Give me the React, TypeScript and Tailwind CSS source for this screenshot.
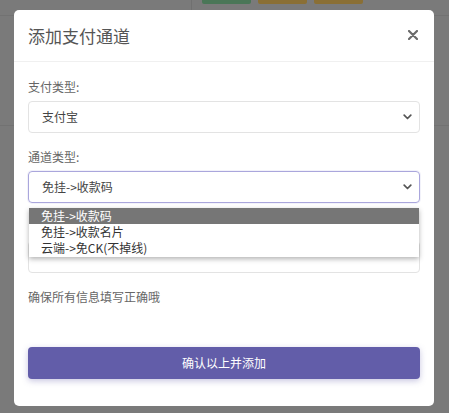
import React from "react";

const FONT = { fontFamily: '"Noto Sans CJK SC", "Noto Sans", sans-serif' };

function Chevron() {
  return (
    <svg width="9" height="6" viewBox="0 0 9 6" className="shrink-0">
      <path d="M1.2 1.2 L4.5 4.5 L7.8 1.2" fill="none" stroke="#555" strokeWidth="1.7" strokeLinecap="round" strokeLinejoin="round" />
    </svg>
  );
}

function FakeSelect({ value, focused }: { value: string; focused?: boolean }) {
  return (
    <div
      className={
        "flex h-8 items-center justify-between rounded-[4px] border pl-[13px] pr-[7px] text-[12px] text-[#444] " +
        (focused ? "border-[#aaa6dc] shadow-[0_0_0_1px_rgba(170,166,220,0.15)]" : "border-[#e3e3e3]")
      }
    >
      <span>{value}</span>
      <Chevron />
    </div>
  );
}

const OPTIONS = ["免挂->收款码", "免挂->收款名片", "云端->免CK(不掉线)"];

export default function App() {
  return (
    <div className="relative h-[413px] w-[449px] overflow-hidden bg-[#7a7a7a]" style={FONT}>
      {/* dimmed page behind the overlay */}
      <div className="flex h-[16px] border-b border-[#727272]">
        <div className="w-[192px] border-r border-[#707070]" />
        <div className="flex gap-[7px] pl-[10px]">
          <div className="h-[4px] w-[49px] rounded-b-[2px] bg-[#4a7657]" />
          <div className="h-[4px] w-[49px] rounded-b-[2px] bg-[#8a6f35]" />
          <div className="h-[4px] w-[49px] rounded-b-[2px] bg-[#8a6f35]" />
        </div>
      </div>
      <div className="h-[110px] border-b border-[#727272]" />

      {/* modal */}
      <div className="absolute left-[14px] top-[10px] flex h-[396px] w-[420px] flex-col rounded-[5px] bg-white">
        <div className="flex h-[52px] items-center justify-between border-b border-[#f0f0f0] px-[14px]">
          <span className="text-[17px] text-[#555]">添加支付通道</span>
          <svg width="10" height="10" viewBox="0 0 10 10" className="mr-[2px] mt-[-2px]">
            <path d="M1 1 L9 9 M9 1 L1 9" stroke="#6a6a6a" strokeWidth="2.2" strokeLinecap="round" />
          </svg>
        </div>
        <div className="px-[14px] pt-[16px]">
          <div className="mb-[15px]">
            <div className="mb-[5px] h-[18px] text-[12px] leading-[18px] text-[#666]">支付类型:</div>
            <FakeSelect value="支付宝" />
          </div>
          <div className="relative mb-[15px]">
            <div className="mb-[5px] h-[18px] text-[12px] leading-[18px] text-[#666]">通道类型:</div>
            <FakeSelect value="免挂->收款码" focused />
            <div className="absolute left-[1px] right-[1px] top-[60px] z-10 bg-white pb-[1px] shadow-[0_2px_5px_rgba(0,0,0,0.3)]">
              {OPTIONS.map((o, i) => (
                <div
                  key={o}
                  className={
                    "h-[16px] pl-[12px] text-[12px] leading-[16px] " +
                    (i === 0 ? "bg-[#767676] text-white" : "text-[#333]")
                  }
                >
                  {o}
                </div>
              ))}
            </div>
          </div>
          <div className="mb-[15px]">
            <div className="mb-[5px] h-[18px]" />
            <div className="h-8 rounded-[4px] border border-[#e3e3e3]" />
          </div>
          <div className="h-[18px] text-[12px] leading-[18px] text-[#666]">确保所有信息填写正确哦</div>
          <button className="mt-[41px] flex h-8 w-full items-center justify-center rounded-[4px] bg-[#625da9] text-[12px] text-white shadow-[0_2px_6px_rgba(98,93,169,0.35)]">
            确认以上并添加
          </button>
        </div>
      </div>
    </div>
  );
}
